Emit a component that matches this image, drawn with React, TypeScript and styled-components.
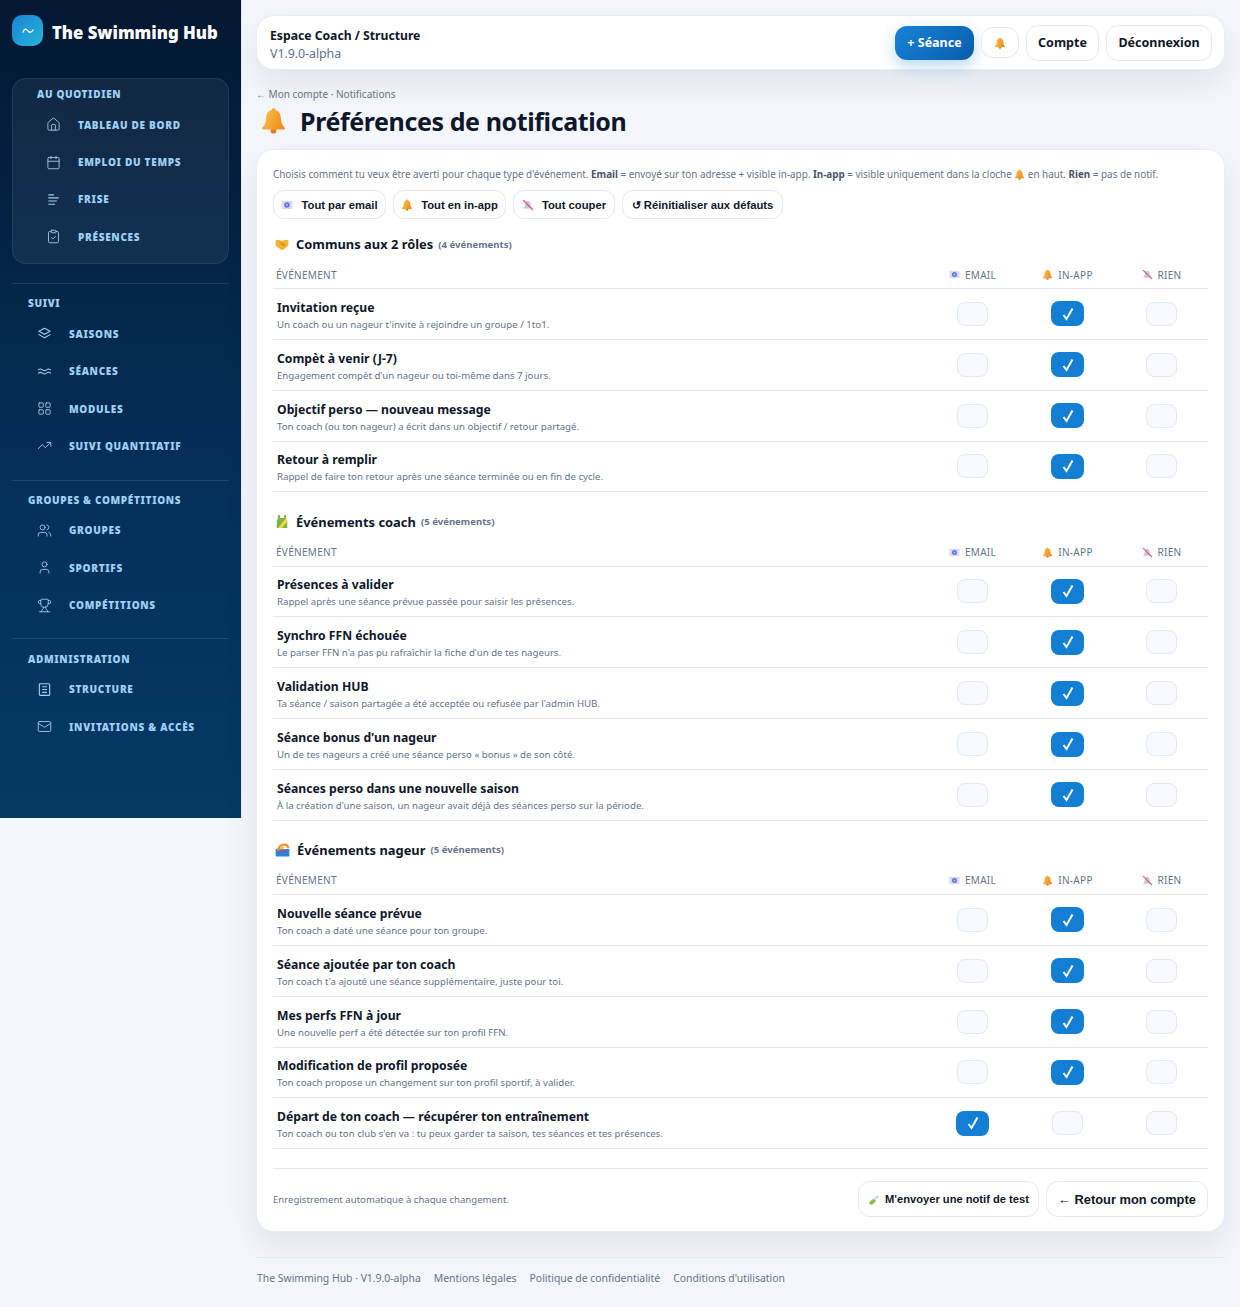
import React from "react";
import styled, { createGlobalStyle } from "styled-components";
import {
  House,
  Calendar,
  ClipboardCheck,
  LayoutGrid,
  TrendingUp,
  Users,
  User,
  Trophy,
  Mail,
} from "lucide-react";

const GlobalStyle = createGlobalStyle`
  * { box-sizing: border-box; }
  body {
    margin: 0;
    background: #f3f6fb;
    font-family: "Noto Sans", "Open Sans", sans-serif;
    color: #0f172a;
  }
`;

// small hand drawn stand-ins for the colour emoji of the screenshot
const BellEmoji = ({ size = 12 }: { size?: number }) => (
  <svg width={size} height={size} viewBox="0 0 24 24" style={{ verticalAlign: "-2px" }}>
    <defs>
      <linearGradient id="bellFill" x1="0" y1="0" x2="1" y2="0.4">
        <stop offset="0" stopColor="#fcc44e" />
        <stop offset="1" stopColor="#f08f1f" />
      </linearGradient>
    </defs>
    <circle cx="12" cy="21" r="2.6" fill="#e5801a" />
    <circle cx="12" cy="2.8" r="1.8" fill="#f5a623" />
    <path d="M12 2.5c-4.6 0-6.4 3.6-6.6 7.6-.2 4-1 6.2-3.4 8.4-.5.5-.2 1.5.7 1.5h18.6c.9 0 1.2-1 .7-1.5-2.4-2.2-3.2-4.4-3.4-8.4-.2-4-2-7.6-6.6-7.6z" fill="url(#bellFill)" />
  </svg>
);

const MailEmoji = ({ size = 12 }: { size?: number }) => (
  <svg width={size} height={size} viewBox="0 0 24 24">
    <rect x="1" y="4" width="22" height="16" rx="1.5" fill="#e3d6f2" />
    <circle cx="12" cy="12" r="5.5" fill="#4f7fdc" />
    <circle cx="12" cy="12" r="2.2" fill="#a9c3f2" />
  </svg>
);

const MuteEmoji = ({ size = 12 }: { size?: number }) => (
  <svg width={size} height={size} viewBox="0 0 24 24">
    <path d="M11 4c-3.4 0-5 3-5 7 0 3-1 4.600-3 6.500V19h17v-1.500c-2-1.900-3-3.500-3-6.500 0-4-2.600-7-6-7z" fill="#c6c9d4" />
    <path d="M3 3l18 18" stroke="#ea4f8c" strokeWidth="2.6" strokeLinecap="round" />
  </svg>
);

const HandshakeEmoji = () => (
  <svg width={14} height={14} viewBox="0 0 24 24">
    <path d="M1 6c3-2 6-1.500 9 0l2 1 2-1c3-1.500 6-2 9 0v7c0 2-1.500 3-3 4l-5 4c-2 1.500-4 1.500-6 0l-5-4c-1.500-1-3-2-3-4z" fill="#f5b335" />
    <path d="M8 11l4-3 6 6-3 3z" fill="#ec8d22" />
  </svg>
);

const ShirtEmoji = () => (
  <svg width={14} height={15} viewBox="0 0 24 24">
    <path d="M5 1h3l1 5h6l1-5h3v6l2 4v12H3V11l2-4z" fill="#7cb342" />
    <path d="M19 6L5 23h7l9-11z" fill="#f6d743" />
  </svg>
);

const SwimEmoji = () => (
  <svg width={15} height={15} viewBox="0 0 24 24">
    <rect x="1" y="11" width="22" height="12" rx="1.500" fill="#1e88e5" />
    <path d="M5 14c1-7 5-10 10-10 4 0 6 3 6 6" fill="none" stroke="#f08a24" strokeWidth="3.500" />
    <circle cx="11" cy="9" r="3" fill="#f6c445" />
    <path d="M4 16c3-2 5 1 8 0s5-2 8 0" fill="none" stroke="#e53956" strokeWidth="2" />
  </svg>
);

const TubeEmoji = () => (
  <svg width={13} height={13} viewBox="0 0 24 24">
    <path d="M17 3l4 4L8 21c-2 2-7-2-5-5z" fill="#cfe3f4" />
    <path d="M10 11l5 4-7 6c-2 2-7-2-5-5z" fill="#8bc34a" />
  </svg>
);

const FriseIcon = () => (
  <svg width="15" height="15" viewBox="0 0 16 16" fill="none" stroke="currentColor" strokeWidth="1.200">
    <path d="M2.500 3h6M2.500 6.300h11M2.500 9.600h9M2.500 13h7" />
  </svg>
);

const StructureIcon = () => (
  <svg width="15" height="15" viewBox="0 0 16 16" fill="none" stroke="currentColor" strokeWidth="1.200">
    <rect x="2.500" y="1.800" width="11" height="12.400" rx="1" />
    <path d="M5.500 5h5M5.500 8h5M5.500 11h5" />
  </svg>
);

const SeasonsIcon = () => (
  <svg width="15" height="15" viewBox="0 0 16 16" fill="none" stroke="currentColor" strokeWidth="1.200" strokeLinejoin="round" strokeLinecap="round">
    <path d="M8 2.500l6 3.200-6 3.200-6-3.200z" />
    <path d="M2 9.200l6 3.300 6-3.300" />
  </svg>
);

const SessionsIcon = () => (
  <svg width="15" height="15" viewBox="0 0 16 16" fill="none" stroke="currentColor" strokeWidth="1.100" strokeLinecap="round">
    <path d="M1.500 6.200c1.600-1.300 2.700-1.300 4.300 0s2.700 1.300 4.300 0 2.900-1.300 4.400 0" />
    <path d="M1.500 9.800c1.600-1.300 2.700-1.300 4.300 0s2.700 1.300 4.300 0 2.900-1.300 4.400 0" />
  </svg>
);

const WaveLogo = () => (
  <svg width="12" height="8" viewBox="0 0 12 8" fill="none" stroke="#fff" strokeWidth="1.400" strokeLinecap="round">
    <path d="M1 5c1.500-3.500 3-3.500 4.500-1.500S9 6.500 11 3" />
  </svg>
);

const Shell = styled.div`
  display: flex;
  align-items: flex-start;
  width: 1240px;
  min-height: 1307px;
`;

const Sidebar = styled.aside`
  width: 242px;
  height: 818px;
  flex-shrink: 0;
  padding: 15px 12px 0;
  background: linear-gradient(180deg, #031731 0%, #04305a 60%, #043a65 100%);
  border-right: 1px solid #e6ebf3;
`;

const Brand = styled.div`
  display: flex;
  align-items: center;
  gap: 9px;
  height: 31px;
  margin-bottom: 32px;
`;

const BrandMark = styled.div`
  width: 31px;
  height: 31px;
  border-radius: 10px;
  background: linear-gradient(135deg, #1b83d8, #25b5d6);
  display: flex;
  align-items: center;
  justify-content: center;
`;

const BrandName = styled.div`
  padding-top: 4px;
  color: #fff;
  font-size: 16.700px;
  font-weight: 900;
  white-space: nowrap;
`;

const NavGroup = styled.section<{ $boxed?: boolean }>`
  padding: ${(p) => (p.$boxed ? "6px 24px 7px" : "0 16px")};
  border-radius: 14px;
  background: ${(p) => (p.$boxed ? "rgba(255,255,255,0.06)" : "transparent")};
  border: ${(p) => (p.$boxed ? "1px solid rgba(255,255,255,0.08)" : "none")};
`;

const NavLabel = styled.div`
  height: 17px;
  margin-bottom: 4px;
  line-height: 19px;
  font-size: 10px;
  font-weight: 900;
  letter-spacing: 0.650px;
  text-transform: uppercase;
  color: #9ed0f5;
  white-space: nowrap;
`;

const NavItem = styled.div`
  display: flex;
  align-items: center;
  gap: 17px;
  height: 37.400px;
  padding-left: 9px;
  font-size: 10px;
  font-weight: 900;
  letter-spacing: 0.700px;
  text-transform: uppercase;
  color: #9ed0f5;
  white-space: nowrap;
  svg {
    flex-shrink: 0;
    color: #a9cdec;
  }
`;

const NavDivider = styled.hr<{ $top: number; $bottom: number }>`
  border: 0;
  height: 1px;
  background: rgba(255, 255, 255, 0.1);
  margin: ${(p) => p.$top}px 0 ${(p) => p.$bottom}px;
`;

const Main = styled.main`
  width: 998px;
  padding: 15px 15px 0 14px;
`;

const Topbar = styled.header`
  height: 55px;
  display: flex;
  align-items: center;
  justify-content: space-between;
  padding: 0 12px 0 13px;
  background: #fff;
  border: 1px solid #e9eef5;
  border-radius: 18px;
  box-shadow: 0 14px 34px rgba(15, 23, 42, 0.08);
`;

const TopText = styled.div`
  padding-top: 5px;
`;

const TopTitle = styled.div`
  font-size: 12.200px;
  font-weight: 700;
  line-height: 18px;
  color: #0f172a;
`;

const TopVersion = styled.div`
  font-size: 12.500px;
  letter-spacing: -0.100px;
  line-height: 18px;
  color: #64748b;
`;

const TopActions = styled.div`
  display: flex;
  align-items: center;
  gap: 7px;
`;

const PrimaryButton = styled.button`
  height: 34px;
  width: 79px;
  border: 0;
  border-radius: 12px;
  background: linear-gradient(135deg, #1583d8, #0b5dac);
  color: #fff;
  font-family: inherit;
  font-size: 12.500px;
  font-weight: 700;
  box-shadow: 0 6px 16px rgba(21, 131, 216, 0.3);
`;

const GhostButton = styled.button<{ $w: number; $h: number }>`
  width: ${(p) => p.$w}px;
  height: ${(p) => p.$h}px;
  display: flex;
  align-items: center;
  justify-content: center;
  background: #fff;
  border: 1px solid #e6ebf3;
  border-radius: 12px;
  font-family: inherit;
  font-size: 12.500px;
  font-weight: 700;
  color: #0f172a;
  padding: 0;
`;

const Crumb = styled.div`
  margin-top: 17px;
  font-size: 10px;
  line-height: 15px;
  color: #64748b;
`;

const PageTitle = styled.h1`
  margin: 3px 0 13px;
  display: flex;
  align-items: center;
  gap: 13px;
  padding-left: 4px;
  height: 31px;
  font-size: 25px;
  letter-spacing: -0.400px;
  font-weight: 700;
  color: #0f172a;
`;

const Card = styled.section`
  height: 1083px;
  padding: 16px 16px 0;
  background: #fff;
  border: 1px solid #e9eef5;
  border-radius: 18px;
  box-shadow: 0 14px 34px rgba(15, 23, 42, 0.08);
`;

const Intro = styled.p`
  margin: 0;
  height: 16px;
  font-size: 9.870px;
  line-height: 16px;
  color: #64748b;
  white-space: nowrap;
  strong {
    color: #475569;
    font-weight: 700;
  }
`;

const QuickRow = styled.div`
  display: flex;
  gap: 7px;
  margin-top: 8px;
`;

const QuickButton = styled.button<{ $w: number }>`
  width: ${(p) => p.$w}px;
  height: 29px;
  display: flex;
  align-items: center;
  justify-content: center;
  gap: 8px;
  padding: 1px 0 0;
  background: #fff;
  border: 1px solid #e6ebf3;
  border-radius: 11px;
  font-family: "Liberation Sans", Arial, sans-serif;
  font-size: 11.250px;
  font-weight: 700;
  color: #0f172a;
  white-space: nowrap;
`;

const SectionHead = styled.h2<{ $top: number }>`
  margin: ${(p) => p.$top}px 0 0;
  height: 20px;
  display: flex;
  align-items: center;
  gap: 7px;
  padding-left: 2px;
  font-size: 12.900px;
  font-weight: 700;
  color: #0f172a;
  white-space: nowrap;
  small {
    font-size: 9.600px;
    font-weight: 700;
    color: #64748b;
    margin-left: -2px;
  }
`;

const HeadRow = styled.div`
  display: grid;
  grid-template-columns: 1fr 95px 95px 93px;
  align-items: center;
  height: 33px;
  margin-top: 2px;
  padding: 6px 0 1px 3px;
  border-bottom: 1px solid #e6ebf3;
  font-size: 10px;
  letter-spacing: 0.300px;
  color: #64748b;
`;

const HeadCell = styled.div`
  display: flex;
  align-items: center;
  justify-content: center;
  gap: 5px;
`;

const Row = styled.div`
  display: grid;
  grid-template-columns: 1fr 95px 95px 93px;
  align-items: center;
  height: 50.850px;
  padding-left: 4px;
  border-bottom: 1px solid #e6ebf3;
`;

const RowText = styled.div`
  padding-top: 3px;
`;

const RowTitle = styled.div`
  font-size: 12.200px;
  font-weight: 700;
  line-height: 18px;
  color: #0f172a;
`;

const RowHint = styled.div`
  font-size: 9.670px;
  line-height: 14px;
  margin-top: 1px;
  color: #64748b;
`;

const Check = styled.div<{ $on?: boolean }>`
  justify-self: center;
  width: ${(p) => (p.$on ? 33 : 31)}px;
  height: ${(p) => (p.$on ? 25 : 24)}px;
  display: flex;
  align-items: center;
  justify-content: center;
  border-radius: 8px;
  background: ${(p) => (p.$on ? "#127fd3" : "#f6f9fd")};
  border: ${(p) => (p.$on ? "none" : "1px solid #e4eaf3")};
`;

const Tick = () => (
  <svg width="12" height="14" viewBox="0 0 12 14" fill="none" stroke="#fff" strokeWidth="2">
    <path d="M1.500 8l3 4L10.500 1.500" />
  </svg>
);

const CardFooter = styled.div`
  display: flex;
  align-items: center;
  justify-content: space-between;
  margin-top: 19px;
  padding-top: 12px;
  border-top: 1px solid #e6ebf3;
`;

const SaveNote = styled.div`
  font-size: 9.600px;
  color: #64748b;
`;

const FooterActions = styled.div`
  display: flex;
  gap: 7px;
`;

const FooterButton = styled.button<{ $w: number; $size: number }>`
  width: ${(p) => p.$w}px;
  height: 36px;
  display: flex;
  align-items: center;
  justify-content: center;
  gap: 4px;
  padding: 0;
  background: #fff;
  border: 1px solid #e6ebf3;
  border-radius: 12px;
  font-family: "Liberation Sans", Arial, sans-serif;
  font-size: ${(p) => p.$size}px;
  font-weight: 700;
  color: #0f172a;
  white-space: nowrap;
`;

const PageFooter = styled.footer`
  margin-top: 25px;
  padding: 12px 0 0 1px;
  border-top: 1px solid #e2e8f0;
  display: flex;
  gap: 13px;
  font-size: 10.400px;
  line-height: 16px;
  color: #64748b;
`;

type Item = { icon: React.ReactNode; label: string };

const ico = { size: 15, strokeWidth: 1.4 };

const navGroups: { label: string; top: number; bottom: number; items: Item[] }[] = [
  {
    label: "Suivi",
    top: 19,
    bottom: 10.5,
    items: [
      { icon: <SeasonsIcon />, label: "Saisons" },
      { icon: <SessionsIcon />, label: "Séances" },
      { icon: <LayoutGrid {...ico} />, label: "Modules" },
      { icon: <TrendingUp {...ico} />, label: "Suivi quantitatif" },
    ],
  },
  {
    label: "Groupes & compétitions",
    top: 15,
    bottom: 10,
    items: [
      { icon: <Users {...ico} />, label: "Groupes" },
      { icon: <User {...ico} />, label: "Sportifs" },
      { icon: <Trophy {...ico} />, label: "Compétitions" },
    ],
  },
  {
    label: "Administration",
    top: 14,
    bottom: 11,
    items: [
      { icon: <StructureIcon />, label: "Structure" },
      { icon: <Mail {...ico} />, label: "Invitations & accès" },
    ],
  },
];

const daily: Item[] = [
  { icon: <House {...ico} />, label: "Tableau de bord" },
  { icon: <Calendar {...ico} />, label: "Emploi du temps" },
  { icon: <FriseIcon />, label: "Frise" },
  { icon: <ClipboardCheck {...ico} />, label: "Présences" },
];

type Event = { title: string; hint: string; email?: boolean };

const sections: { icon: React.ReactNode; title: string; top: number; events: Event[] }[] = [
  {
    icon: <HandshakeEmoji />,
    title: "Communs aux 2 rôles",
    top: 15,
    events: [
      { title: "Invitation reçue", hint: "Un coach ou un nageur t'invite à rejoindre un groupe / 1to1." },
      { title: "Compèt à venir (J-7)", hint: "Engagement compèt d'un nageur ou toi-même dans 7 jours." },
      { title: "Objectif perso — nouveau message", hint: "Ton coach (ou ton nageur) a écrit dans un objectif / retour partagé." },
      { title: "Retour à remplir", hint: "Rappel de faire ton retour après une séance terminée ou en fin de cycle." },
    ],
  },
  {
    icon: <ShirtEmoji />,
    title: "Événements coach",
    top: 19.2,
    events: [
      { title: "Présences à valider", hint: "Rappel après une séance prévue passée pour saisir les présences." },
      { title: "Synchro FFN échouée", hint: "Le parser FFN n'a pas pu rafraîchir la fiche d'un de tes nageurs." },
      { title: "Validation HUB", hint: "Ta séance / saison partagée a été acceptée ou refusée par l'admin HUB." },
      { title: "Séance bonus d'un nageur", hint: "Un de tes nageurs a créé une séance perso « bonus » de son côté." },
      { title: "Séances perso dans une nouvelle saison", hint: "À la création d'une saison, un nageur avait déjà des séances perso sur la période." },
    ],
  },
  {
    icon: <SwimEmoji />,
    title: "Événements nageur",
    top: 19.2,
    events: [
      { title: "Nouvelle séance prévue", hint: "Ton coach a daté une séance pour ton groupe." },
      { title: "Séance ajoutée par ton coach", hint: "Ton coach t'a ajouté une séance supplémentaire, juste pour toi." },
      { title: "Mes perfs FFN à jour", hint: "Une nouvelle perf a été détectée sur ton profil FFN." },
      { title: "Modification de profil proposée", hint: "Ton coach propose un changement sur ton profil sportif, à valider." },
      { title: "Départ de ton coach — récupérer ton entraînement", hint: "Ton coach ou ton club s'en va : tu peux garder ta saison, tes séances et tes présences.", email: true },
    ],
  },
];

export default function App() {
  return (
    <Shell>
      <GlobalStyle />
      <Sidebar>
        <Brand>
          <BrandMark>
            <WaveLogo />
          </BrandMark>
          <BrandName>The Swimming Hub</BrandName>
        </Brand>
        <NavGroup $boxed>
          <NavLabel>Au quotidien</NavLabel>
          {daily.map((item) => (
            <NavItem key={item.label}>
              {item.icon}
              {item.label}
            </NavItem>
          ))}
        </NavGroup>
        {navGroups.map((group) => (
          <React.Fragment key={group.label}>
            <NavDivider $top={group.top} $bottom={group.bottom} />
            <NavGroup>
              <NavLabel>{group.label}</NavLabel>
              {group.items.map((item) => (
                <NavItem key={item.label}>
                  {item.icon}
                  {item.label}
                </NavItem>
              ))}
            </NavGroup>
          </React.Fragment>
        ))}
      </Sidebar>
      <Main>
        <Topbar>
          <TopText>
            <TopTitle>Espace Coach / Structure</TopTitle>
            <TopVersion>V1.9.0-alpha</TopVersion>
          </TopText>
          <TopActions>
            <PrimaryButton>+ Séance</PrimaryButton>
            <GhostButton $w={38} $h={31}>
              <BellEmoji size={12} />
            </GhostButton>
            <GhostButton $w={73} $h={36}>Compte</GhostButton>
            <GhostButton $w={106} $h={36}>Déconnexion</GhostButton>
          </TopActions>
        </Topbar>
        <Crumb>← Mon compte · Notifications</Crumb>
        <PageTitle>
          <BellEmoji size={27} />
          Préférences de notification
        </PageTitle>
        <Card>
          <Intro>
            Choisis comment tu veux être averti pour chaque type d'événement. <strong>Email</strong> = envoyé sur ton adresse + visible in-app. <strong>In-app</strong> = visible uniquement dans la cloche <BellEmoji size={11} /> en haut. <strong>Rien</strong> = pas de notif.
          </Intro>
          <QuickRow>
            <QuickButton $w={113}><MailEmoji />Tout par email</QuickButton>
            <QuickButton $w={113}><BellEmoji />Tout en in-app</QuickButton>
            <QuickButton $w={102}><MuteEmoji />Tout couper</QuickButton>
            <QuickButton $w={161}>↺ Réinitialiser aux défauts</QuickButton>
          </QuickRow>
          {sections.map((section) => (
            <div key={section.title}>
              <SectionHead $top={section.top}>
                {section.icon}
                {section.title}
                <small>({section.events.length} événements)</small>
              </SectionHead>
              <HeadRow>
                <div>ÉVÉNEMENT</div>
                <HeadCell><MailEmoji size={11} />EMAIL</HeadCell>
                <HeadCell><BellEmoji size={11} />IN-APP</HeadCell>
                <HeadCell><MuteEmoji size={11} />RIEN</HeadCell>
              </HeadRow>
              {section.events.map((event) => (
                <Row key={event.title}>
                  <RowText>
                    <RowTitle>{event.title}</RowTitle>
                    <RowHint>{event.hint}</RowHint>
                  </RowText>
                  <Check $on={event.email}>{event.email && <Tick />}</Check>
                  <Check $on={!event.email}>{!event.email && <Tick />}</Check>
                  <Check />
                </Row>
              ))}
            </div>
          ))}
          <CardFooter>
            <SaveNote>Enregistrement automatique à chaque changement.</SaveNote>
            <FooterActions>
              <FooterButton $w={181} $size={11.15}><TubeEmoji />M'envoyer une notif de test</FooterButton>
              <FooterButton $w={162} $size={12.85}>← Retour mon compte</FooterButton>
            </FooterActions>
          </CardFooter>
        </Card>
        <PageFooter>
          <span>The Swimming Hub · V1.9.0-alpha</span>
          <span>Mentions légales</span>
          <span>Politique de confidentialité</span>
          <span>Conditions d'utilisation</span>
        </PageFooter>
      </Main>
    </Shell>
  );
}
